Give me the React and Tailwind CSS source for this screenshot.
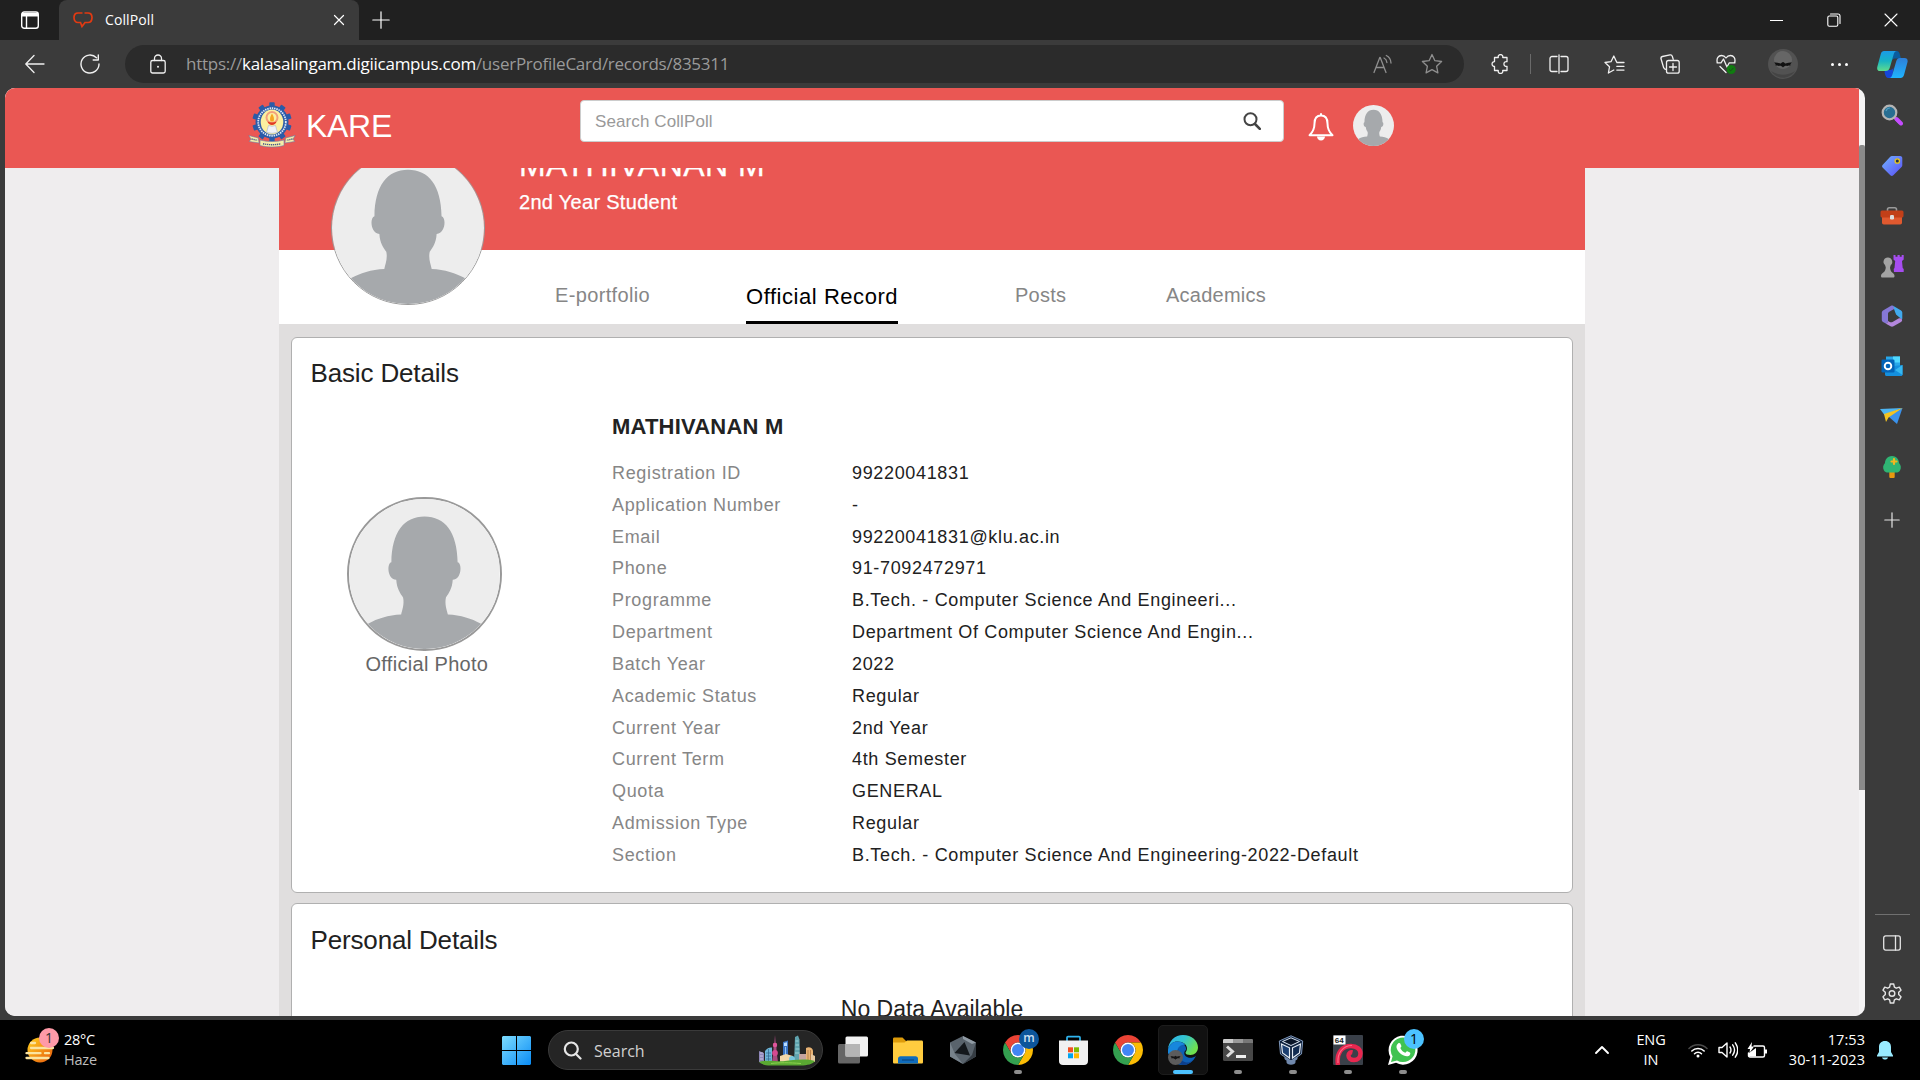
import React from "react";

const details = [
  ["Registration ID", "99220041831"],
  ["Application Number", "-"],
  ["Email", "99220041831@klu.ac.in"],
  ["Phone", "91-7092472971"],
  ["Programme", "B.Tech. - Computer Science And Engineeri..."],
  ["Department", "Department Of Computer Science And Engin..."],
  ["Batch Year", "2022"],
  ["Academic Status", "Regular"],
  ["Current Year", "2nd Year"],
  ["Current Term", "4th Semester"],
  ["Quota", "GENERAL"],
  ["Admission Type", "Regular"],
  ["Section", "B.Tech. - Computer Science And Engineering-2022-Default"],
];

function Svg({ w = 20, h = w, box = "0 0 20 20", className = "", sw = 1.3, children, ...rest }) {
  return (
    <svg width={w} height={h} viewBox={box} className={`block shrink-0 ${className}`} fill="none" stroke="currentColor" strokeWidth={sw} strokeLinecap="round" strokeLinejoin="round" {...rest}>
      {children}
    </svg>
  );
}

function Person({ className }) {
  return (
    <svg viewBox="0 0 154 154" className={className}>
      <rect width="154" height="154" fill="#ededed" />
      <path
        fill="#a6a9ac"
        d="M77 18C56 18 43.500 34 43 65C38 66 39 83 48 83C48.500 92 52 97 55 101C56.500 108 54 114 53 118.500C40 119 28 123 20 127.500L0 140V154H154V140L134 127.500C126 123 114 119 101 118.500C100 114 97.500 108 99 101C102 97 105.500 92 106 83C115 83 116 66 111 65C110.500 34 98 18 77 18Z"
      />
    </svg>
  );
}

/* ---------- Browser chrome ---------- */

function TabStrip() {
  return (
    <div className="flex h-10 bg-[#202020] text-white">
      <div className="flex w-[59px] items-center pl-[21px]">
        <svg width="18" height="18" viewBox="0 0 18 18" fill="none" stroke="#fff" strokeWidth="1.4">
          <rect x="0.7" y="0.9" width="16.600" height="16.400" rx="2.5" />
          <path d="M1 1.500h16v4H1z" fill="#fff" stroke="none" />
          <path d="M5.500 5v12" />
        </svg>
      </div>
      <div className="flex w-[300px] items-center rounded-t-lg bg-[#3b3b3b] pl-[14px] pr-[14px]">
        <svg width="20" height="16" viewBox="0 0 20 16" fill="none" stroke="#e23a12" strokeWidth="1.7">
          <path d="M6 1H5C2.500 1 1 3 1 5.500S2.500 10.500 5 10.500H7.500L9 14.500L12 10.500H15C17.500 10.500 19 8.500 19 5.500S17.500 1 15 1H11.500M9.500 1H6" />
        </svg>
        <span className="ml-[12px] flex-1 pb-px text-[14px] tracking-[0.1px]">CollPoll</span>
        <Svg w={12} box="0 0 12 12" sw={1.2}><path d="M1.500 1.500l9 9M10.500 1.500l-9 9" /></Svg>
      </div>
      <div className="flex w-11 items-center justify-center">
        <Svg w={18} box="0 0 18 18" sw={1.2} className="-mt-px"><path d="M9 0.800v16.400M0.800 9h16.400" /></Svg>
      </div>
      <div className="ml-auto flex items-center pr-px">
        <div className="flex w-[57px] justify-center"><div className="h-px w-[13px] bg-white" /></div>
        <div className="flex w-[57px] justify-center">
          <Svg w={14} box="0 0 14 14" sw={1.1}><rect x="0.800" y="3" width="10" height="10.200" rx="1.500" /><path d="M3.500 1H11c1.200 0 2 .8 2 2v7.500" /></Svg>
        </div>
        <div className="flex w-[57px] justify-center">
          <Svg w={14} box="0 0 14 14" sw={1.1}><path d="M1 1l12 12M13 1L1 13" /></Svg>
        </div>
      </div>
    </div>
  );
}

function Slot({ className = "w-[55.6px]", children }) {
  return <div className={`flex shrink-0 items-center justify-center ${className}`}>{children}</div>;
}

function Toolbar() {
  return (
    <div className="flex h-12 items-center bg-[#3b3b3b] text-[#f0f0f0]">
      <Slot className="w-[70px]">
        <Svg w={20}><path d="M19 10H1M9 1.500L.8 10L9 18.500" /></Svg>
      </Slot>
      <Slot className="w-[40px]">
        <Svg w={20} sw={1.4}><path d="M16.500 3.800A9 9 0 1 0 19 10M18.300 1v5H13.200" /></Svg>
      </Slot>
      <div className="ml-[15px] flex h-[38px] w-[1339px] items-center rounded-full bg-[#2b2b2b]">
        <Svg w={16} h={20} box="0 0 16 20" className="ml-[24.500px]">
          <rect x="0.800" y="6.500" width="14.400" height="12.500" rx="1.800" />
          <path d="M4.500 6.500V4.500a3.500 3.500 0 0 1 7 0v2" />
          <circle cx="8" cy="12.800" r="1" fill="currentColor" stroke="none" />
        </Svg>
        <div className="ml-[20.500px] flex-1 text-[17px] tracking-[-0.250px] text-[#9a9a9a]">
          https://<span className="text-white">kalasalingam.digiicampus.com</span>/userProfileCard/records/835311
        </div>
        <Svg w={20} className="text-[#8f8f8f]"><path d="M1 18.500L6.800 3.500H7.200L13 18.500M3.200 13.500h7.600M11 4c2 1 2.700 2.500 2.900 4.500M13.300 1.500c3.200 1.500 4.500 4.500 4.700 7.500" /></Svg>
        <Svg w={22} box="0 0 22 22" className="ml-[28px] mr-[21px] text-[#8f8f8f]"><path d="M11 1.500l2.900 6.200 6.700.8-5 4.700 1.300 6.700L11 16.600l-5.900 3.300 1.300-6.700-5-4.700 6.700-.8z" /></Svg>
      </div>
      <Slot className="w-[71px]">
        <Svg w={20}><path d="M4.500 3.500h3.800a2.300 2.300 0 1 1 4.400 0H17v4.200a2.400 2.400 0 1 0 0 4.600V16.500h-4.300a2.300 2.300 0 1 1-4.400 0H4.500v-4a2.400 2.400 0 1 1 0-4.900z" /></Svg>
      </Slot>
      <div className="-ml-[5px] h-5 w-px bg-[#6a6a6a]" />
      <Slot>
        <Svg w={20}><path d="M8 2.500H3A2 2 0 0 0 1 4.500v11a2 2 0 0 0 2 2h5M12 2.500h5a2 2 0 0 1 2 2v11a2 2 0 0 1-2 2h-5M10 .8v18.400" /></Svg>
      </Slot>
      <Slot>
        <Svg w={21} box="0 0 21 20"><path d="M12.500 7.200L9.800 1.500L7 7.200L1 8l4.500 4.300L4.400 18.500l5.400-3M12.800 8h7.200M12.800 11.800h7.200M12.800 15.600h7.200" /></Svg>
      </Slot>
      <Slot>
        <Svg w={20}><rect x="6.500" y="6.500" width="12.700" height="12.700" rx="2" /><path d="M13 9.500v7M9.500 13h7M6.500 15.500c-1.500 0-2.500-.7-2.900-2L1 4.800C.7 3.600 1.300 2.800 2.400 2.500L10 .9c1.100-.2 2 .3 2.300 1.400l.9 3" /></Svg>
      </Slot>
      <Slot>
        <Svg w={20}><path d="M1.300 8.500C.2 4 2.500 1.500 5.500 1.500c2 0 3.500 1 4.500 2.500 1-1.500 2.500-2.500 4.500-2.500 3 0 5.300 2.500 4.200 7M1 8.800h4L7.500 5l3.500 8 2.300-4.200H19M4 12.500l6 6" /><circle cx="15.200" cy="15.500" r="4.500" fill="#107c10" stroke="none" /><path d="M13.300 15.600l1.400 1.300 2.400-2.700" stroke="#1c4d1c" strokeWidth="1" /></Svg>
      </Slot>
      <Slot className="w-[58.8px]">
        <svg width="30" height="30" viewBox="0 0 30 30">
          <circle cx="15" cy="15" r="15" fill="#525252" />
          <circle cx="15" cy="11" r="9" fill="#666" />
          <path d="M6 13.500c1.800-.3 3.800 0 5.500.8 1.200.4 2 .1 2.600-1.300l.9.6.9-.6c.6 1.400 1.400 1.700 2.600 1.300 1.700-.8 3.700-1.100 5.500-.8-1.300.9-1.700 1.900-1.700 3.200-1.300-.5-2.300-.4-3.200.2-1.500-.4-3 .1-4.100 1.700-1.100-1.600-2.600-2.100-4.100-1.700-.9-.6-1.900-.7-3.200-.2 0-1.300-.4-2.300-1.700-3.200z" fill="#111" />
          <path d="M3 22c8 5 16 5 24 0-6 9-18 9-24 0z" fill="#444" />
        </svg>
      </Slot>
      <Slot className="w-[54px]">
        <div className="flex gap-[4px]">
          <i className="size-[3px] rounded-full bg-white" /><i className="size-[3px] rounded-full bg-white" /><i className="size-[3px] rounded-full bg-white" />
        </div>
      </Slot>
      <Slot className="w-[53.6px]">
        <svg width="31" height="28" viewBox="0 0 31 28" className="shrink-0">
          <defs>
            <linearGradient id="cpA" x1="0" y1="0" x2="0" y2="1"><stop offset="0" stopColor="#1b9be8" /><stop offset=".5" stopColor="#17b3c4" /><stop offset="1" stopColor="#5fdc8c" /></linearGradient>
            <linearGradient id="cpB" x1="0" y1="0" x2="0" y2="1"><stop offset="0" stopColor="#2e7fd8" /><stop offset="1" stopColor="#1fb4ff" /></linearGradient>
          </defs>
          <path d="M17 1h2.500C22 1 22.500 3 23 5l1 3.500h-6c-2 0-3 1-3.600 3z" fill="#0a5c9e" />
          <path d="M8 20h5c2 0 3-1 3.500-3l-1 9c-.5 2-2 2-3.500 2-3 0-3.500-2-4.500-6z" fill="#1647d9" />
          <path d="M7 1h13c-2 0-2.800 1.500-3.500 4l-3.500 12c-.7 2.500-1.800 4-4.500 4H3c-2.500 0-3.300-2-2.600-4.500L3.800 4C4.500 1.800 5.500 1 7 1z" fill="url(#cpA)" />
          <path d="M23 8h4.500c2.800 0 3.600 2 2.900 4.500L27 25c-.6 2-1.800 3-3.500 3H12c2 0 2.800-1.500 3.500-4L19 12c.7-2.500 1.800-4 4-4z" fill="url(#cpB)" />
        </svg>
      </Slot>
    </div>
  );
}

function Sidebar() {
  const cell = "flex h-[50.3px] items-center justify-center";
  return (
    <div className="flex w-[54px] flex-col pt-[1.500px] text-[#e4e4e4]">
      <div className={cell}>
        <svg width="22" height="22" viewBox="0 0 22 22"><path d="M13.500 13.500l5.500 6" stroke="#aaa" strokeWidth="2.500" /><path d="M15.500 15l4.500 4.500" stroke="#c44bff" strokeWidth="4" strokeLinecap="round" /><circle cx="8.500" cy="8.500" r="6.800" fill="#286e92" stroke="#b4b4b4" strokeWidth="2.200" /><path d="M5 7a4 4 0 0 1 4-3" stroke="#4f9dc0" strokeWidth="1.200" fill="none" /></svg>
      </div>
      <div className={cell}>
        <svg width="22" height="22" viewBox="0 0 22 22" className="mt-[2px]"><defs><linearGradient id="tg" x1="0" y1="0" x2="1" y2="1"><stop offset="0" stopColor="#72b4ff" /><stop offset="1" stopColor="#5a4df5" /></linearGradient></defs><path d="M11 1h8c1.500 0 2.500 1 2.300 2.500V10c0 1-.3 1.500-1 2.200l-8 8c-1 1-2 1-3 0l-7.500-7.500c-1-1-1-2 0-3L9 2c.7-.7 1.200-1 2-1z" fill="url(#tg)" /><circle cx="16.300" cy="6" r="2.200" fill="#26324a" stroke="#e8c61e" strokeWidth="1.300" /></svg>
      </div>
      <div className={cell}>
        <svg width="24" height="20" viewBox="0 0 24 20" className="mt-px"><path d="M7.500 5V3.500c0-1 .7-1.800 1.700-1.800h5.600c1 0 1.700.8 1.700 1.800V5" stroke="#9a9a9a" strokeWidth="1.600" fill="none" /><rect x="2" y="9" width="20" height="9.500" rx="1.800" fill="#e0592f" /><rect x="0.500" y="4.500" width="23" height="7" rx="1.500" fill="#c23f18" /><rect x="10" y="9" width="4" height="4.500" rx="1.200" fill="#ddd" /></svg>
      </div>
      <div className={cell}>
        <svg width="24" height="24" viewBox="0 0 24 24"><path d="M13.500 1h2v1.800h2V1h2.200v1.800h2V1h2v4.500l-1.700 1.500.7 7 1 1v3H14l-.3-3 .8-1 .7-7-1.700-1.500z" fill="#a64df0" /><path d="M8 3.500a4.300 4.300 0 0 1 2.600 7.700v1.300H10c0 3 .8 5 2.500 6.300 1.300.8 2 1.800 2 3.200 0 1-.5 1.500-1.500 1.500H2.500C1.500 23.500 1 23 1 22c0-1.400.7-2.400 2-3.200C5 17.500 5.800 15.500 5.800 12.500h-.6v-1.300A4.300 4.300 0 0 1 8 3.500z" fill="#a3a3a3" /></svg>
      </div>
      <div className={cell}>
        <svg width="22" height="22" viewBox="0 0 22 22">
          <path d="M10.500 0.500L2 5.500C1.200 6 .8 6.700.8 7.600v7.200c0 1 .4 1.600 1.200 2.100l3 1.700c1.300-.5 2-1.300 2-2.600V9c0-1 .4-1.700 1.300-2.200L14 3.500C13 1.500 12 .2 10.500.5z" fill="#8577d6" />
          <path d="M10.500 0.500c1.500-.4 2.800 1.200 2.500 3.500L15 9.500l6 5c.3-.5.300-1 .3-1.500V7.600c0-.9-.4-1.600-1.200-2.100L12.500.9C11.800.5 11.200.4 10.500.5z" fill="#41aaee" />
          <path d="M21 14.500c-.8-1.400-2.200-1.700-3.500-1l-6 3.400c-1 .6-1.900.5-2.800 0L7 16c0 1.500-1 2.500-2.500 2.500L9.500 21.300c1 .6 2 .6 3 0l7.500-4.400c.9-.6 1.300-1.200 1-2.400z" fill="#b387dd" />
          <path d="M11 7l3.700 2.100v4.200L11 15.400l-3.700-2.100V9.100z" fill="#3b3b3b" />
        </svg>
      </div>
      <div className={cell}>
        <svg width="22" height="22" viewBox="0 0 22 22"><path d="M5 1.500h14v12H5z" fill="#28a8ea" /><path d="M12 1.500h7v6h-7z" fill="#50d9ff" /><path d="M4 12l17.500-2v9.500c0 .8-.5 1.500-1.500 1.500H5.500C4.500 21 4 20.300 4 19.500z" fill="#1490df" /><path d="M14 15l7.500-5v10z" fill="#35b8f1" /><rect x="0.500" y="4.500" width="13" height="13" rx="1.300" fill="#0364b8" /><circle cx="7" cy="11" r="3.300" fill="none" stroke="#fff" strokeWidth="1.900" /></svg>
      </div>
      <div className={cell}>
        <svg width="24" height="18" viewBox="0 0 24 18"><path d="M0 2L22.500 1 4.500 8z" fill="#4db5f2" /><path d="M4.500 8L22.500 1 17 17 9 10z" fill="#3a92ec" /><path d="M4 7L22.500 1 8.500 10.500 6 15z" fill="#f3c321" /></svg>
      </div>
      <div className={cell}>
        <svg width="20" height="24" viewBox="0 0 20 24"><rect x="7.300" y="16" width="5.400" height="7" rx="1" fill="#e8990f" /><path d="M10 1c5 0 7 4 7 7 2 2 2.500 5 1 7.500-1 1.500-2 2-4 2H6c-2 0-3-.5-4-2C.5 13 1 10 3 8c0-3 2-7 7-7z" fill="#2fb573" /><path d="M12 4v5M9.500 6.500h5" stroke="#f3b61f" strokeWidth="2.200" strokeLinecap="round" /></svg>
      </div>
      <div className="mt-[3px] flex h-[50px] items-center justify-center">
        <Svg w={16} box="0 0 16 16" sw={1.2}><path d="M8 .8v14.400M.8 8h14.400" /></Svg>
      </div>
      <div className="mx-auto mt-auto h-px w-[35px] bg-[#707070]" />
      <div className="flex h-[55px] items-center justify-center pt-px">
        <Svg w={18} h={16} box="0 0 18 16"><rect x="0.700" y="0.900" width="16.600" height="14.200" rx="2" /><path d="M12.500 1v14" /></Svg>
      </div>
      <div className="mb-[3px] flex h-[47px] items-center justify-center">
        <Svg w={22} box="0 0 22 22" sw={1.400}><path d="M9.300 1h3.400l.7 3.100 1.900 1.100 3-1 1.700 3-2.300 2.100v2.300l2.300 2.200-1.700 3-3-1-1.900 1.100-.7 3.100H9.300l-.7-3.100-1.900-1.100-3 1-1.700-3 2.300-2.200V9.300L2 7.200l1.700-3 3 1 1.900-1.100z" /><circle cx="11" cy="10.500" r="2.800" /></Svg>
      </div>
    </div>
  );
}

/* ---------- Web page ---------- */

function Crest() {
  const teeth = Array.from({ length: 10 }, (_, i) => i * 36);
  return (
    <svg width="48" height="46" viewBox="0 0 48 46" className="block">
      {teeth.map((a) => (
        <rect key={a} x="21.300" y="0.300" width="5.400" height="6" rx="0.800" fill="#2b5ba8" transform={`rotate(${a} 24 20)`} />
      ))}
      <circle cx="24" cy="20" r="16.500" fill="#2b5ba8" />
      <circle cx="24" cy="20" r="13.800" fill="none" stroke="#dbe6f5" strokeWidth="1.800" strokeDasharray="1.500 .8" />
      <ellipse cx="24" cy="20" rx="11.300" ry="12.500" fill="#fbf0a0" />
      <circle cx="24" cy="15.500" r="5.500" fill="none" stroke="#f2a07c" strokeWidth="2" />
      <path d="M24 11.500c2 3 2.500 5.500 1.500 8h-3c-1-2.500-.5-5 1.500-8z" fill="#f6a623" />
      <path d="M19.500 19.500c2.500 1.200 6.500 1.200 9 0-.6 2.300-2.200 3.500-4.500 3.500s-3.900-1.200-4.500-3.500z" fill="#e23b22" />
      <path d="M20.500 23.500l3.500.8 3.500-.8 2 7-5.500.8-5.500-.8z" fill="#f0f2f7" stroke="#9aa7c4" strokeWidth=".5" />
      <path d="M.8 33.500l9.500 2.500.8 5-9.800-1.500 1.700-2.500zM47.200 33.500L37.700 36l-.8 5 9.800-1.500-1.700-2.500z" fill="#f7eea8" stroke="#6c7aa8" strokeWidth=".6" />
      <path d="M12 38c8 2 16 2 24 0v5.500c-8 2-16 2-24 0z" fill="#f7eea8" stroke="#6c7aa8" strokeWidth=".6" />
      <path d="M15 41.800c6 1.200 12 1.200 18 0M3.500 37l6 1.300M44.500 37l-6 1.300" fill="none" stroke="#4b5c8c" strokeWidth="1.400" strokeDasharray="1.300 .7" />
    </svg>
  );
}

function SiteHeader() {
  return (
    <div className="flex h-20 shrink-0 bg-[#ea5753]">
      <div className="ml-[243px] mt-[14px]"><Crest /></div>
      <div className="ml-[10px] mt-[19px] w-[274px] text-[32px] leading-[38px] tracking-[-0.3px] text-white">KARE</div>
      <div className="mt-[12px] flex h-[42px] w-[704px] items-center rounded-[4px] border border-[#ccc] bg-white pl-[14px] pr-[22px]">
        <span className="flex-1 pt-[2px] text-[17px] tracking-[0.1px] text-[#999]">Search CollPoll</span>
        <Svg w={18} box="0 0 18 18" sw={2} className="text-[#444]"><circle cx="7.500" cy="7.200" r="6" /><path d="M12 12l4.800 4.800" strokeWidth="2.600" /></Svg>
      </div>
      <svg width="26" height="28" viewBox="0 0 26 28" className="ml-[24px] mt-[25px] block">
        <path d="M13 2.500c-4.500 0-6.500 3.500-6.500 8 0 5-1.500 8.500-5 11.700h23c-3.500-3.200-5-6.700-5-11.700 0-4.500-2-8-6.500-8z" fill="none" stroke="#fff" strokeWidth="2" strokeLinejoin="round" />
        <path d="M13 0.300v2.500" stroke="#fff" strokeWidth="2" />
        <path d="M9 23.500h8c0 2.300-1.700 4-4 4s-4-1.700-4-4z" fill="#fff" />
      </svg>
      <Person className="ml-[19px] mt-[17px] block size-[41px] rounded-full" />
    </div>
  );
}

function ProfileTop() {
  return (
    <div className="relative h-[156px] shrink-0 overflow-hidden bg-white">
      <div className="h-[82px] overflow-hidden bg-[#ea5753] pl-[240px] text-white">
        <div className="-mt-[23px] h-[45px] text-[32px] leading-[40px] tracking-[0.45px] [-webkit-text-stroke:0.300px_#fff]">MATHIVANAN M</div>
        <div className="pt-px text-[20px] leading-[22px] tracking-[0.3px] [-webkit-text-stroke:0.250px_#fff]">2nd Year Student</div>
      </div>
      <div className="flex h-[74px] text-[20px] text-[#868686]">
        <div className="ml-[276px] mt-[32px] w-[191px] leading-[26px] tracking-[0.35px]">E-portfolio</div>
        <div className="mr-[117px] h-[74px] w-[152px] whitespace-nowrap border-b-[3px] border-black pt-[34px] text-[22px] leading-[26px] tracking-[0.55px] text-black"><span className="-mr-2">Official Record</span></div>
        <div className="mt-[32px] w-[151px] leading-[26px] tracking-[0.25px]">Posts</div>
        <div className="mt-[32px] leading-[26px] tracking-[0.25px]">Academics</div>
      </div>
      <div className="absolute -top-[17px] left-[52px] size-[154px] overflow-hidden rounded-full border border-[#9a9a9a]">
        <Person className="size-full" />
      </div>
    </div>
  );
}

function BasicDetails() {
  return (
    <section className="h-[556px] shrink-0 rounded-[6px] border border-[#b0b0b0] bg-white">
      <h2 className="ml-[18.500px] mt-[19px] text-[26px] leading-[32px] tracking-[-0.150px] text-[#212121]">Basic Details</h2>
      <div className="flex">
        <div className="flex w-[320px] flex-col pl-[55px] pt-[108px]">
          <div className="h-[154px] w-[155px] overflow-hidden rounded-full border-2 border-[#999]">
            <Person className="size-full" />
          </div>
          <div className="ml-[18.500px] mt-[-2px] text-[20px] leading-[30px] tracking-[0.3px] text-[#666]">Official Photo</div>
        </div>
        <div>
          <h3 className="pt-[23px] text-[22px] font-bold leading-[30px] tracking-[0.2px] text-[#222]">MATHIVANAN M</h3>
          <dl className="mt-[16px] text-[18px] leading-[31.830px] tracking-[0.66px]">
            {details.map(([k, v]) => (
              <div key={k} className="flex whitespace-nowrap">
                <dt className="w-[240px] text-[#868686]">{k}</dt>
                <dd className="text-[#212121]">{v}</dd>
              </div>
            ))}
          </dl>
        </div>
      </div>
    </section>
  );
}

function PageView() {
  return (
    <div className="flex h-[928px] w-[1860px] overflow-hidden rounded-[10px] bg-[#f5f4f5] font-['Liberation_Sans',Arial,sans-serif]">
      <div className="flex w-[1854px] flex-col overflow-hidden bg-[#efedee]">
        <SiteHeader />
        <div className="ml-[274px] flex h-[848px] w-[1306px] flex-col overflow-hidden bg-[#e0dede]">
          <ProfileTop />
          <div className="flex flex-col gap-[10px] px-[12px] pt-[13px]">
            <BasicDetails />
            <section className="h-[200px] shrink-0 rounded-[6px] border border-[#b0b0b0] bg-white text-[#212121]">
              <h2 className="ml-[18.500px] mt-[20px] text-[26px] leading-[32px] tracking-[-0.150px]">Personal Details</h2>
              <p className="mt-[38px] text-center text-[23px] leading-[30px]">No Data Available</p>
            </section>
          </div>
        </div>
      </div>
      <div className="w-[6px] pt-[57px]"><div className="h-[645px] rounded-t-[2px] bg-[#8b8b8b]" /></div>
    </div>
  );
}

/* ---------- Taskbar ---------- */

function Task({ children, badge, run, active, tile }) {
  return (
    <div className="relative flex h-[60px] w-[55px] shrink-0 items-center justify-center">
      {tile && <div className="absolute left-[2.500px] top-[5px] size-[50px] rounded-[5px] border border-[#1c1c1c] bg-[#111]" />}
      <div className="relative flex size-[30px] items-center justify-center">{children}</div>
      {badge}
      {run && <div className="absolute bottom-[6px] left-[23.500px] h-1 w-2 rounded-full bg-[#8d8d8d]" />}
      {active && <div className="absolute bottom-[6px] left-[17.500px] h-1 w-5 rounded-full bg-[#4cc2ff]" />}
    </div>
  );
}

function Chrome() {
  return (
    <svg width="30" height="30" viewBox="2 2 44 44">
      <path fill="#ea4335" d="M24 13H43.050A22 22 0 0 0 4.950 13L14.470 29.500A11 11 0 0 1 24 13z" />
      <path fill="#fbbc05" d="M43.050 13H24A11 11 0 0 1 33.530 29.500L24 46A22 22 0 0 0 43.050 13z" />
      <path fill="#34a050" d="M4.950 13L14.470 29.500A11 11 0 0 0 33.530 29.500L24 46A22 22 0 0 1 4.950 13z" />
      <circle cx="24" cy="24" r="11" fill="#fff" />
      <circle cx="24" cy="24" r="8.800" fill="#4285f4" />
    </svg>
  );
}

function Skyline() {
  return (
    <svg width="56" height="32" viewBox="0 0 56 32">
      <path d="M0 17l5 2v9H0z" fill="#8e86b8" />
      <path d="M1 19h3M1 22h3M1 25h3" stroke="#d9d4ee" strokeWidth=".8" />
      <path d="M6 17c2-3 5-4 7-3.500V28H6z" fill="#6db6d8" />
      <path d="M7 19h5M7 22h5M7 25h5M9.500 15v13" stroke="#31648c" strokeWidth=".7" />
      <path d="M16 1l.7 8h.8v8l1.500 11h-6l1.500-11V9h.8z" fill="#a84b7e" />
      <circle cx="16" cy="11" r="2.200" fill="#e0559c" /><circle cx="16" cy="19" r="2.900" fill="#d44a90" />
      <path d="M24 8l5-1.500V28h-5z" fill="#3b74c4" /><path d="M25 9l3-.7V12h-3z" fill="#b8dcff" /><path d="M26.500 13v14" stroke="#8ec4f5" />
      <path d="M36 3l3-1.500 1.500 4L41 28h-6z" fill="#5fa3ae" /><path d="M36.500 7h3M36.500 11h3.500M36.500 15h4M36 19h4.500" stroke="#aee0e0" strokeWidth=".8" />
      <path d="M21 22l6-2 7 2v7H21z" fill="#f2d7a8" /><circle cx="33" cy="25" r="3" fill="#77c6dd" />
      <path d="M40 20h7v9h-7z" fill="#c5a4a0" /><path d="M47 14c3-2 7 0 7 3v12h-7z" fill="#e8b374" /><path d="M49 16v11M51.500 16v11" stroke="#a56d3c" strokeWidth=".7" />
      <path d="M52 20l4 2v6h-4z" fill="#e6c9a2" />
      <path d="M0 28c8-3 18 0 26-1s20-3 30 0c-2 3-8 4.500-14 4.500H12C6 31.500 2 30 0 28z" fill="#5aa832" />
      <path d="M12 29.500c8-1 18-1 30 0" stroke="#8bd04e" strokeWidth="1" fill="none" />
    </svg>
  );
}

function Taskbar() {
  return (
    <div className="flex h-[60px] bg-black text-[14.500px] leading-5 text-white">
      <div className="flex w-[502px] items-center pl-[25px]">
        <div className="relative h-9 w-[31px]">
          <svg width="30" height="28" viewBox="0 0 30 28" className="absolute left-0 top-[4px]">
            <defs><linearGradient id="sun" x1="0" y1="0" x2="1" y2="1"><stop offset="0" stopColor="#ffd21f" /><stop offset="1" stopColor="#e8590c" /></linearGradient></defs>
            <circle cx="15" cy="14" r="12.500" fill="url(#sun)" />
            <path d="M6 7h4M6 12h22M1.500 17.200h14M20 17.200h4M1.500 22h22" stroke="#fbe4a0" strokeWidth="2.300" strokeLinecap="round" />
          </svg>
          <div className="absolute -top-[4px] left-[14px] flex size-5 items-center justify-center rounded-full bg-[#ff9aa8] text-[14px] text-[#333]">1</div>
        </div>
        <div className="ml-[8px]">
          <div className="tracking-[-0.3px]">28°C</div>
          <div className="tracking-[-0.2px] text-[#bdbdbd]">Haze</div>
        </div>
      </div>
      <div className="flex w-[46px] items-center">
        <svg width="29" height="29" viewBox="0 0 29 29">
          <defs><linearGradient id="win" x1="0" y1="0" x2="1" y2="1"><stop offset="0" stopColor="#7ddcff" /><stop offset="1" stopColor="#0a8cf5" /></linearGradient></defs>
          <path d="M1 0h13v14H0V1zM15 0h13l1 1v13H15zM0 15h14v14H1l-1-1zM15 15h14v13l-1 1H15z" fill="url(#win)" />
        </svg>
      </div>
      <div className="mr-[2.500px] mt-[10px] flex h-10 w-[275px] items-center rounded-full border border-[#3a3a3a] bg-[#252525] pl-[13.500px] pr-[7px]">
        <Svg w={19} box="0 0 19 19" sw={2.200} className="text-[#e6e6e6]"><circle cx="8.300" cy="8" r="6.500" /><path d="M13 13l4.500 4.500" /></Svg>
        <span className="ml-[12.500px] flex-1 pt-px text-[16px] text-[#d0d0d0]">Search</span>
        <Skyline />
      </div>
      <Task>
        <svg width="30" height="28" viewBox="0 0 30 28"><rect y="8" width="22" height="19.500" rx="1.500" fill="#666" /><rect x="7.500" y="0.500" width="22.500" height="20" rx="1.500" fill="#f2f2f2" /><path d="M7.500 8H22v12.500H7.500z" fill="#b5b5b5" /></svg>
      </Task>
      <Task>
        <svg width="30" height="27" viewBox="0 0 30 27"><path d="M0 2C0 .8.8.5 1.500.5h8L13 4v6H0z" fill="#dd9b0a" /><path d="M0 5.500h11.500L14 3.500h14.500c1 0 1.500.6 1.500 1.500v20c0 1-.5 1.500-1.500 1.500h-27C.5 26.500 0 26 0 25z" fill="#ffcc3f" /><path d="M5 26.500V22c0-1.700 1-2.700 2.500-2.700h15c1.500 0 2.500 1 2.500 2.700v4.500z" fill="#0f6cbd" /><path d="M9 23h12" stroke="#0b4a86" strokeWidth="1.300" /></svg>
      </Task>
      <Task>
        <svg width="26" height="28" viewBox="0 0 26 28"><path d="M13 0l13 6.500v14L13 28 0 20.500v-14z" fill="#59636c" /><path d="M13 0l13 6.500L22 8 13 3z" fill="#8f9aa3" /><path d="M26 6.500v14L13 28l9-9z" fill="#353c43" /><path d="M0 6.500L5 18l8 10L0 20.500z" fill="#77828b" /><path d="M14.500 6L20 19.500 4.500 17z" fill="#14181c" /></svg>
      </Task>
      <Task run badge={<div className="absolute left-[28.500px] top-[9px] flex size-5 items-center justify-center rounded-full bg-[#0c559b] pb-0.5 text-[12px] font-semibold text-[#cfe0f2]">m</div>}><Chrome /></Task>
      <Task>
        <svg width="29" height="30" viewBox="0 0 29 30"><path d="M8 7V2.500C8 2 8.300 1.700 9 1.700h11c.7 0 1 .3 1 .8V7" fill="none" stroke="#2fb4ee" strokeWidth="1.700" /><path d="M0 5.500h29V26c0 2.500-1.500 4-4 4H4c-2.500 0-4-1.500-4-4z" fill="#f1f1f1" /><path d="M9 12.300h5v5H9z" fill="#f25022" /><path d="M15 12.300h5v5h-5z" fill="#7fba00" /><path d="M9 18.300h5v5H9z" fill="#00a4ef" /><path d="M15 18.300h5v5h-5z" fill="#ffb900" /></svg>
      </Task>
      <Task><Chrome /></Task>
      <Task tile active>
        <svg width="30" height="30" viewBox="0 0 30 30">
          <defs><linearGradient id="edT" x1="0" y1="0" x2="1" y2=".5"><stop offset="0" stopColor="#2eb4ee" /><stop offset=".5" stopColor="#33c4d0" /><stop offset="1" stopColor="#6fe04f" /></linearGradient></defs>
          <path d="M0 15C1 8 6 6 10 7c6 1 9 5 8 8-2 1.500-2.500 4 0 6.500 3 2 7 1.500 10-.5C25 27 20 30 15 30 6 30 0 23 0 15z" fill="#0e5fb5" />
          <path d="M10.500 14c-2 5 1 12 8 13.500 3 .5 6-1.500 8-4.500-4 6-9 7.500-12 7C8 29 5 18 10.500 14z" fill="#0c3f8c" />
          <path d="M0 14.500C.5 6 7 0 15 0c9 0 15 6 15 12.500 0 4.500-3.500 7.500-7.500 7.500-3 0-5-1-5-2.300 0-1 1.500-1.700 1.500-4.200C19 9.500 15 6.500 9.500 6.500 5 6.500 1.500 9 0 14.500z" fill="url(#edT)" />
          <path d="M0 15C2 9 6 6.500 10 6.600c3 0 6 1.400 7.500 3.400-6-1-9 4-8 8.500H0z" fill="#1787dc" />
          <circle cx="7.500" cy="22.500" r="7.500" fill="#5c5c5c" /><path d="M2.500 21c2 .2 3 .8 4 .5l1-.7 1 .7c1 .3 2-.3 4-.5-.8 1-1 1.500-1 2.500-1.500-.5-3 0-4 1.300-1-1.300-2.500-1.800-4-1.300 0-1-.2-1.500-1-2.500z" fill="#151515" />
        </svg>
      </Task>
      <Task run>
        <svg width="30" height="22" viewBox="0 0 30 22"><rect width="30" height="22" rx="1.500" fill="#474747" /><path d="M0 4V1.500C0 .5.500 0 1.500 0H10v4z" fill="#ccc" /><path d="M10 0h10v4H10z" fill="#9a9a9a" /><path d="M20 0h8.500c1 0 1.500.5 1.500 1.500V4H20z" fill="#777" /><path d="M4 7.500l5.500 5-5.500 5" stroke="#ddd" strokeWidth="3" fill="none" /><path d="M13 16h10v3H13z" fill="#eee" /></svg>
      </Task>
      <Task run>
        <svg width="26" height="30" viewBox="0 0 26 30" className="-ml-[4px]"><path d="M6.500 22h13c.5 2-.5 3-2 3.500v1.800c0 1.500-2 2.400-4.500 2.400s-4.500-.9-4.500-2.400v-1.800c-1.500-.5-2.500-1.500-2-3.500z" fill="#7088ac" /><path d="M13 0.800L24.700 6 23.500 19 13 26 2.500 19 1.300 6z" fill="#10233f" stroke="#7f97ba" strokeWidth="1" /><path d="M13 2.800l8.500 3.700L13 10.500 4.500 6.500z" fill="#0a1629" stroke="#d7e2ef" strokeWidth="1" /><path d="M3.500 9l8 3.800V23L4.500 18z" fill="#1c3f70" stroke="#e6edf5" strokeWidth="1.200" /><path d="M22.500 9l-8 3.800V23l7-5z" fill="#122c52" stroke="#e6edf5" strokeWidth="1.200" /></svg>
      </Task>
      <Task run>
        <svg width="30" height="30" viewBox="0 0 30 30"><rect width="30" height="30" rx="1" fill="#3a4049" /><path d="M5 30C3 18 9 11 18 11c6 0 9.500 3.500 9.500 7.500 0 4-3 6.500-6.500 6.500s-5.500-2-5.500-4.500S17.500 17 19.500 17.500" stroke="#e8274f" strokeWidth="4.500" fill="none" /><path d="M5 28C4 18 10 10.500 19 10.500" stroke="#ff6b86" strokeWidth="1.200" fill="none" /><rect x="0.500" y="0.500" width="12" height="9" fill="#fff" /><text x="1.800" y="8" fontSize="8" fontWeight="700" fill="#222" fontFamily="Liberation Sans">64</text></svg>
      </Task>
      <Task run badge={<div className="absolute left-[28.500px] top-[9px] flex size-5 items-center justify-center rounded-full bg-[#4cc2ff] text-[14px] text-black">1</div>}>
        <svg width="30" height="30" viewBox="0 0 30 30"><path d="M0 30l2.300-8A14.500 14.500 0 1 1 8 27.800z" fill="#fff" /><path d="M3 27l1.600-5.700A12.300 12.300 0 1 1 9 25.500z" fill="#40c351" /><path d="M10.300 8.300c.5-.5 1.700-.5 2 .2l1.100 2.600c.2.600-1.100 1.900-1.100 1.900 1 2.300 2.700 3.900 5 4.800 0 0 1.400-1.900 2-1.600l2.600 1.300c.8.400.4 1.900-.3 2.700-1 1.200-3.400 1.500-6.500 0-3-1.400-5.600-4-6.500-7.200-.4-2 .3-3.600 1.700-4.700z" fill="#fff" /></svg>
      </Task>
      <div className="ml-auto flex items-center pr-[27px]">
        <Svg w={16} h={10} box="0 0 16 10" sw={1.900} className="mr-px"><path d="M2 8l6-6 6 6" /></Svg>
        <div className="ml-[24px] w-[32px] text-center tracking-[-0.1px]">ENG<br />IN</div>
        <Svg w={20} h={16} box="0 0 20 16" sw={1.500} className="ml-[21px]"><path d="M1 6.500a12.500 12.500 0 0 1 18 0" stroke="#4a4a4a" /><path d="M3.800 9a8.700 8.700 0 0 1 12.400 0M6.500 11.800a5 5 0 0 1 7 0" /><circle cx="10" cy="14" r="1.500" fill="#fff" stroke="none" /></Svg>
        <Svg w={20} h={18} box="0 0 20 18" sw={1.400} className="ml-[10px]"><path d="M1 6.500h3L9 2v14l-5-4.500H1zM12 6c1.300 2 1.300 4 0 6M14.700 3.800c2.400 3.400 2.400 7 0 10.400M17.300 1.800c3 4.500 3 10 0 14.400" /></Svg>
        <Svg w={20} h={17} box="0 0 20 17" sw={1.400} className="ml-[9px]"><path d="M7 4h9c1 0 1.500.6 1.500 1.500v8c0 1-.5 1.500-1.500 1.500H3c-1 0-1.500-.5-1.500-1.500V11" /><path d="M2 14.500V11l7-5v8.500zM18 7.500h2v4h-2z" fill="#fff" stroke="none" /><path d="M5 0L.5 7H3L2.500 11 7 4.500H4.500z" fill="#fff" stroke="none" /></Svg>
        <div className="ml-[17px] w-[81px] text-right tracking-[0.05px]">17:53<br />30-11-2023</div>
        <svg width="16" height="20" viewBox="0 0 16 20" className="ml-[12px]"><path d="M8 1c3.800 0 6 2.500 6 6v5l2 3.500v1H0v-1L2 12V7c0-3.500 2.200-6 6-6z" fill="#99ebff" /><path d="M5 17.500h6c-.5 1.500-1.500 2-3 2s-2.500-.5-3-2z" fill="#99ebff" /></svg>
      </div>
    </div>
  );
}

export default function App() {
  return (
    <div className="h-[1080px] w-[1920px] overflow-hidden bg-[#3b3b3b] font-['Open_Sans','Noto_Sans',sans-serif]">
      <TabStrip />
      <Toolbar />
      <div className="flex h-[932px] pl-[5px]">
        <PageView />
        <Sidebar />
      </div>
      <Taskbar />
    </div>
  );
}
